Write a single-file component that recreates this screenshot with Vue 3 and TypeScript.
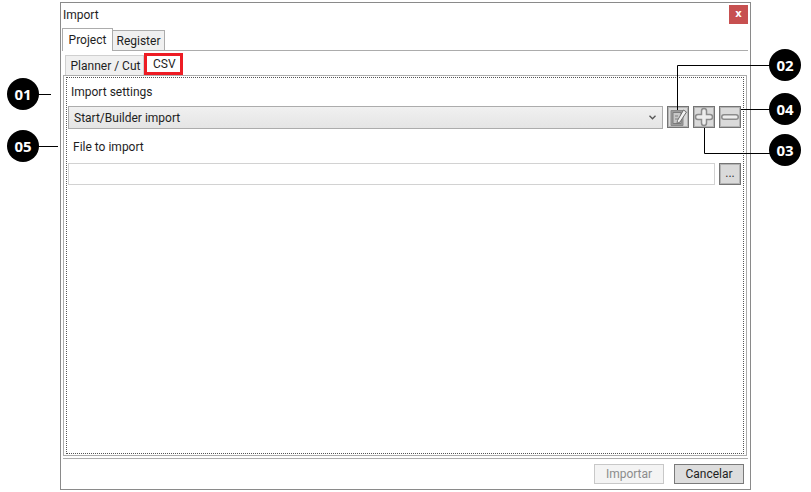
<script setup lang="ts">
interface Callout { id: string; label: string; x: number; y: number }
const callouts: Callout[] = [
  { id: 'a', label: '01', x: 7, y: 78 },
  { id: 'b', label: '05', x: 7, y: 130 },
  { id: 'c', label: '02', x: 769, y: 49 },
  { id: 'd', label: '04', x: 769, y: 93 },
  { id: 'e', label: '03', x: 769, y: 134 },
]
</script>

<template>
  <div class="page">
    <div class="window">
      <div class="titlebar">
        <span class="title">Import</span>
        <div class="close">x</div>
      </div>
      <div class="main-tabs">
        <div class="tab tab-active">Project</div>
        <div class="tab tab-idle">Register</div>
      </div>
      <div class="sub-tabs">
        <div class="subtab">Planner / Cut</div>
        <div class="subtab-csv">CSV</div>
      </div>
      <div class="panel">
        <div class="dotted">
          <div class="label first">Import settings</div>
          <div class="row">
            <div class="combo">
              <span>Start/Builder import</span>
              <svg width="7" height="5" viewBox="0 0 7 5"><path d="M.5 .8l3 3 3-3" fill="none" stroke="#555" stroke-width="1.3" /></svg>
            </div>
            <button class="icon-btn" type="button" aria-label="Edit">
              <svg width="20" height="20" viewBox="0 0 20 20">
                <path d="M3 3.500h12v15H3z" fill="#9a9a9a" stroke="#8a8a8a" />
                <path d="M5 5.500h8v11H5z" fill="#c8c8c8" stroke="#7c7c7c" />
                <path d="M7 9h3M7 12h3" stroke="#808080" />
                <path d="M9.500 13.500l6-10.500 3 2-6.500 10-3 1.500z" fill="#f2f2f2" stroke="#6e6e6e" />
              </svg>
            </button>
            <button class="icon-btn" type="button" aria-label="Add">
              <svg width="20" height="20" viewBox="0 0 20 20">
                <path d="M10 4v12M4 10h12" fill="none" stroke="#8c8c8c" stroke-width="6.500" stroke-linecap="round" />
                <path d="M10 4v12M4 10h12" fill="none" stroke="#ededed" stroke-width="3.500" stroke-linecap="round" />
              </svg>
            </button>
            <button class="icon-btn" type="button" aria-label="Remove">
              <svg width="20" height="20" viewBox="0 0 20 20">
                <path d="M4 10h12" fill="none" stroke="#8c8c8c" stroke-width="6" stroke-linecap="round" />
                <path d="M4 10h12" fill="none" stroke="#ededed" stroke-width="3" stroke-linecap="round" />
              </svg>
            </button>
          </div>
          <div class="label second">File to import</div>
          <div class="row">
            <div class="input"></div>
            <button class="icon-btn dots" type="button">...</button>
          </div>
        </div>
      </div>
      <div class="footer">
        <button class="btn disabled" type="button">Importar</button>
        <button class="btn" type="button">Cancelar</button>
      </div>
    </div>

    <svg class="lines" width="811" height="492" viewBox="0 0 811 492">
      <g fill="none" stroke="#000" stroke-width="1">
        <path d="M38 94.500H51" />
        <path d="M38 146.500H58" />
        <path d="M772 65.500H677.500V110" />
        <path d="M741 109.500H772" />
        <path d="M704.500 128V153.500H772" />
      </g>
    </svg>
    <div
      v-for="c in callouts"
      :key="c.id"
      class="badge"
      :style="{ left: c.x + 'px', top: c.y + 'px' }"
    >{{ c.label }}</div>
  </div>
</template>

<style>
html, body { margin: 0; background: #fff; }
</style>

<style scoped>
.page {
  position: relative;
  width: 811px;
  height: 492px;
  overflow: hidden;
  background: #fff;
  padding: 2px 0 0 60px;
  box-sizing: border-box;
  font-family: "Roboto", "Noto Sans", sans-serif;
  font-size: 12px;
  color: #1e1e1e;
}
.window {
  width: 691px;
  height: 488px;
  box-sizing: border-box;
  border: 1px solid #8a8a8a;
  background: #fff;
  display: flex;
  flex-direction: column;
}
.titlebar {
  height: 25px;
  flex: none;
  display: flex;
  align-items: flex-start;
  justify-content: space-between;
  padding: 2px 2px 0 2px;
  box-sizing: border-box;
}
.title { line-height: 21px; }
.close {
  width: 19px;
  height: 19px;
  background: #c75050;
  color: #fff;
  font: bold 10px/17px "DejaVu Sans", sans-serif;
  text-align: center;
}
.main-tabs {
  height: 23px;
  box-sizing: border-box;
  flex: none;
  margin: 0 2px 0 1px;
  border-bottom: 1px solid #acacac;
  display: flex;
  align-items: flex-end;
}
.tab {
  box-sizing: border-box;
  border: 1px solid #acacac;
  text-align: center;
}
.tab-active {
  width: 51px;
  height: 23px;
  border-bottom: 0;
  line-height: 22px;
  background: #fff;
  margin-bottom: -1px;
  position: relative;
}
.tab-idle {
  width: 52px;
  height: 20px;
  border-bottom: 0;
  border-left: 0;
  line-height: 20px;
  background: #f0f0f0;
}
.sub-tabs {
  height: 22px;
  flex: none;
  margin: 2px 0 0 4px;
  display: flex;
  align-items: flex-end;
}
.subtab {
  width: 79px;
  height: 20px;
  box-sizing: border-box;
  border: 1px solid #d0d0d0;
  border-bottom: 0;
  background: #f0f0f0;
  line-height: 20px;
  text-align: center;
  padding-left: 2px;
  white-space: nowrap;
}
.subtab-csv {
  width: 39px;
  height: 22px;
  box-sizing: border-box;
  border: 3px solid #ed1c24;
  line-height: 17px;
  padding-left: 6px;
  background: #fff;
}
.panel {
  height: 381px;
  flex: none;
  margin: 0 3px 0 2px;
  box-sizing: border-box;
  border: 1px solid #acacac;
  padding: 1px 2px;
}
.dotted {
  height: 100%;
  box-sizing: border-box;
  border: 1px dotted #555;
  padding: 0 1px;
}
.label { line-height: 16px; }
.label.first { margin: 6px 0 6px 3px; }
.label.second { margin: 10px 0 8px 5px; }
.row {
  display: flex;
  align-items: flex-start;
  gap: 4px;
}
.combo {
  width: 595px;
  height: 23px;
  box-sizing: border-box;
  border: 1px solid #acacac;
  background: linear-gradient(#f0f0f0, #e5e5e5);
  display: flex;
  align-items: center;
  justify-content: space-between;
  padding: 0 6px 0 5px;
}
.input {
  width: 647px;
  height: 22px;
  box-sizing: border-box;
  border: 1px solid #d2d2d2;
  background: #fff;
}
.icon-btn {
  width: 22px;
  height: 22px;
  box-sizing: border-box;
  border: 1px solid #747474;
  box-shadow: inset 0 0 0 1px #b4b4b4;
  background: #dadada;
  padding: 0;
  display: flex;
  align-items: center;
  justify-content: center;
  font-family: inherit;
  font-size: 12px;
  color: #333;
}
.dots { line-height: 18px; align-items: flex-end; padding-bottom: 2px; }
.footer {
  flex: 1;
  display: flex;
  justify-content: flex-end;
  align-items: flex-start;
  gap: 10px;
  margin: 2px 2px 0 2px;
  border-top: 1px solid #acacac;
  padding: 5px 4px 0 0;
}
.btn {
  width: 70px;
  height: 20px;
  box-sizing: border-box;
  border: 1px solid #7a7a7a;
  background: #dddddd;
  padding: 0;
  font-family: inherit;
  font-size: 12px;
  line-height: 18px;
  color: #1e1e1e;
}
.btn.disabled {
  border-color: #c8c8c8;
  background: #f4f4f4;
  color: #8c8c8c;
}
.lines {
  position: absolute;
  left: 0;
  top: 0;
  pointer-events: none;
}
.badge {
  position: absolute;
  width: 32px;
  height: 32px;
  border-radius: 50%;
  background: #000;
  color: #fff;
  font: bold 15px/32px "Open Sans", sans-serif;
  text-align: center;
}
</style>
